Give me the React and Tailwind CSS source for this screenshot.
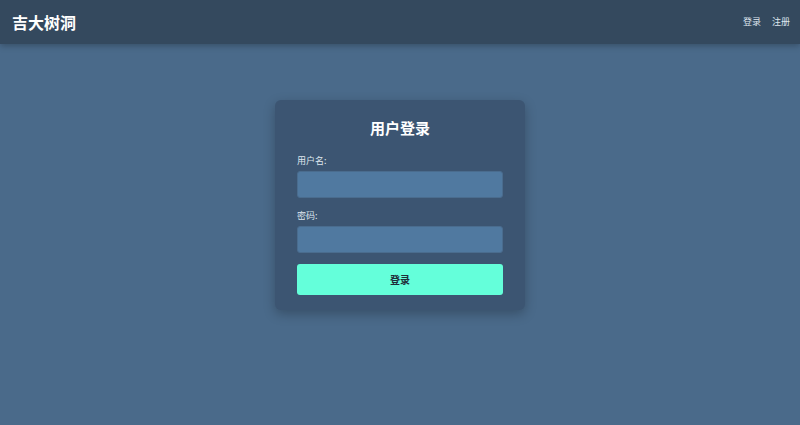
export default function App() {
  return (
    <div className="min-h-screen w-full bg-[#4a6a8a] font-['Noto_Sans_CJK_SC',sans-serif]">
      <header className="flex h-[44px] items-center justify-between bg-[#34495e] pl-3 pr-[10px] shadow-[0_2px_6px_rgba(0,0,0,0.25)]">
        <h1 className="text-[16px] font-bold text-white">吉大树洞</h1>
        <nav className="flex gap-[11px] text-[9px] text-[#dfe6ee]">
          <a href="#">登录</a>
          <a href="#">注册</a>
        </nav>
      </header>
      <main className="flex justify-center pt-[56px]">
        <div className="w-[250px] rounded-md bg-[#3c5572] px-[22px] pb-[15px] pt-[17px] shadow-[0_4px_12px_rgba(0,0,0,0.25)]">
          <h2 className="mb-[15px] text-center text-[15px] font-bold leading-[22px] text-white">用户登录</h2>
          <label className="block text-[9px] leading-[14px] text-[#dfe6ee]">用户名:</label>
          <input className="mt-[3px] block h-[27px] w-full rounded-[3px] border border-[#4a6c8e] bg-[#5079a0]" />
          <label className="mt-[11px] block text-[9px] leading-[14px] text-[#dfe6ee]">密码:</label>
          <input type="password" className="mt-[3px] block h-[27px] w-full rounded-[3px] border border-[#4a6c8e] bg-[#5079a0]" />
          <button className="mt-[11px] block h-[31px] w-full rounded-[3px] bg-[#64ffda] text-[10px] font-bold text-[#1f2d3a]">登录</button>
        </div>
      </main>
    </div>
  );
}
